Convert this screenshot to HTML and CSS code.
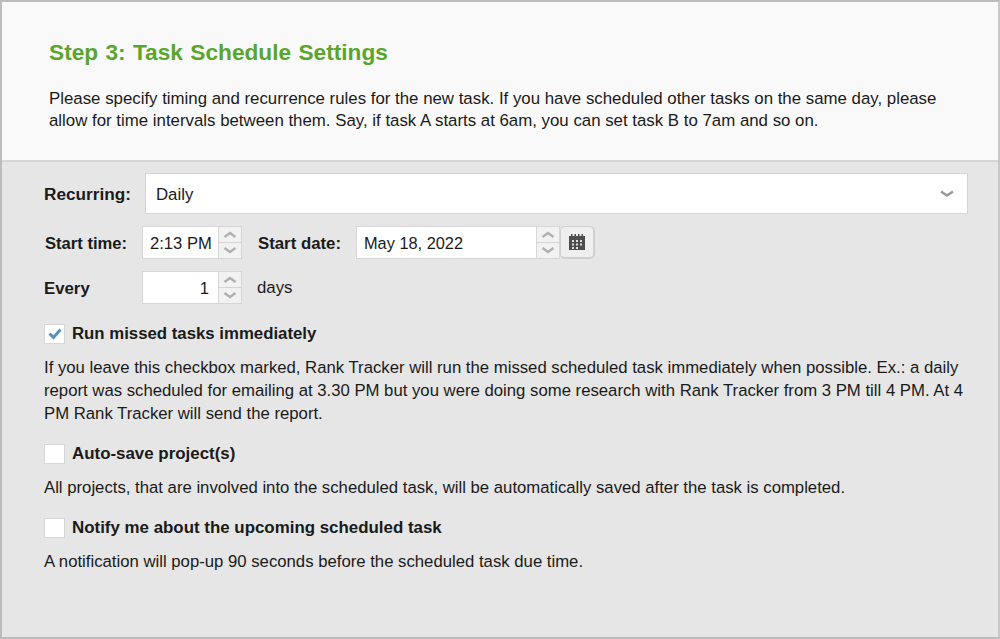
FILE: index.html
```html
<!DOCTYPE html>
<html lang="en">
<head>
<meta charset="utf-8">
<title>Task Schedule Settings</title>
<link rel="stylesheet" href="styles.css">
</head>
<body>
<main class="frame">
  <header class="head">
    <h1 class="title">Step 3: Task Schedule Settings</h1>
    <p class="intro">Please specify timing and recurrence rules for the new task. If you have scheduled other tasks on the same day, please<br>allow for time intervals between them. Say, if task A starts at 6am, you can set task B to 7am and so on.</p>
  </header>
  <section class="body">
    <div class="row-recurring">
      <span class="label label-recurring">Recurring:</span>
      <div class="select">
        <span class="select-value">Daily</span>
        <svg class="chev" width="14" height="8" viewBox="0 0 14 8"><path d="M1 1.5 L7 5.5 L13 1.5" fill="none" stroke="#999" stroke-width="2.6"/></svg>
      </div>
    </div>
    <div class="row-time">
      <span class="label label-time">Start time:</span>
      <div class="spin spin-small">
        <span class="spin-value">2:13 PM</span>
        <span class="arrows">
          <span class="arrow"><svg width="14" height="7" viewBox="0 0 14 7"><path d="M1.5 6 L7 2 L12.5 6" fill="none" stroke="#b0b0b0" stroke-width="2.4"/></svg></span>
          <span class="arrow"><svg width="14" height="7" viewBox="0 0 14 7"><path d="M1.5 1 L7 5 L12.5 1" fill="none" stroke="#b0b0b0" stroke-width="2.4"/></svg></span>
        </span>
      </div>
      <span class="label label-date">Start date:</span>
      <div class="spin spin-date">
        <span class="spin-value date-value">May 18, 2022</span>
        <span class="arrows">
          <span class="arrow"><svg width="14" height="7" viewBox="0 0 14 7"><path d="M1.5 6 L7 2 L12.5 6" fill="none" stroke="#b0b0b0" stroke-width="2.4"/></svg></span>
          <span class="arrow"><svg width="14" height="7" viewBox="0 0 14 7"><path d="M1.5 1 L7 5 L12.5 1" fill="none" stroke="#b0b0b0" stroke-width="2.4"/></svg></span>
        </span>
      </div>
      <div class="cal">
        <svg width="18" height="18" viewBox="0 0 18 18"><path fill="#4d4d4d" d="M1 3h2V1h1.5v2h2V1h1.5v2h2V1h1.5v2h2V1H15v2h2v14H1z"/><g fill="#dedede"><rect x="4" y="7" width="2" height="2"/><rect x="8" y="7" width="2" height="2"/><rect x="12" y="7" width="2" height="2"/><rect x="4" y="10.5" width="2" height="2"/><rect x="8" y="10.5" width="2" height="2"/><rect x="12" y="10.5" width="2" height="2"/><rect x="8" y="14" width="2" height="2"/><rect x="4" y="14" width="2" height="2"/></g></svg>
      </div>
    </div>
    <div class="row-every">
      <span class="label label-every">Every</span>
      <div class="spin spin-small">
        <span class="spin-value right">1</span>
        <span class="arrows">
          <span class="arrow"><svg width="14" height="7" viewBox="0 0 14 7"><path d="M1.5 6 L7 2 L12.5 6" fill="none" stroke="#b0b0b0" stroke-width="2.4"/></svg></span>
          <span class="arrow"><svg width="14" height="7" viewBox="0 0 14 7"><path d="M1.5 1 L7 5 L12.5 1" fill="none" stroke="#b0b0b0" stroke-width="2.4"/></svg></span>
        </span>
      </div>
      <span class="unit">days</span>
    </div>
    <div class="option first">
      <span class="check"><svg width="16" height="14" viewBox="0 0 16 14"><path d="M2.5 6.5 L6.5 10.5 L13.5 2.5" fill="none" stroke="#5b8fbe" stroke-width="3"/></svg></span>
      <span class="label">Run missed tasks immediately</span>
    </div>
    <p class="desc">If you leave this checkbox marked, Rank Tracker will run the missed scheduled task immediately when possible. Ex.: a daily<br>report was scheduled for emailing at 3.30 PM but you were doing some research with Rank Tracker from 3 PM till 4 PM. At 4<br>PM Rank Tracker will send the report.</p>
    <div class="option">
      <span class="check"></span>
      <span class="label label-wide">Auto-save project(s)</span>
    </div>
    <p class="desc">All projects, that are involved into the scheduled task, will be automatically saved after the task is completed.</p>
    <div class="option">
      <span class="check"></span>
      <span class="label label-wide">Notify me about the upcoming scheduled task</span>
    </div>
    <p class="desc">A notification will pop-up 90 seconds before the scheduled task due time.</p>
  </section>
</main>
</body>
</html>
```

FILE: styles.css
```css
* { box-sizing: border-box; }
html, body { margin: 0; height: 100%; background: #fff; }
body { width: 1000px; height: 639px; overflow: hidden; font-family: "Liberation Sans", Arial, sans-serif; font-size: 16.8px; color: #1a1a1a; }
.frame { width: 1000px; height: 639px; border: 2px solid #bcbcbc; border-right-color: #c8c8c8; display: flex; flex-direction: column; background: #e6e6e6; }
.head { height: 160px; background: #f9f9f9; border-bottom: 2px solid #d6d6d6; padding: 37px 0 0 47px; }
.title { margin: 0; font-size: 22.7px; line-height: 26px; font-weight: bold; color: #5aa62d; word-spacing: 1px; }
.intro { margin: 23px 0 0; line-height: 22px; font-size: 16.83px; }
.body { flex: 1; padding: 11px 30px 0 42px; }
.label { font-weight: bold; }
.row-recurring { display: flex; align-items: center; }
.label-recurring { width: 101px; padding-top: 2px; font-size: 17.2px; }
.select { width: 823px; height: 41px; background: #fff; border: 1px solid #d4d4d4; display: flex; align-items: center; justify-content: space-between; padding: 0 13px 0 10px; }
.select-value { padding-top: 2px; }
.row-time { display: flex; align-items: center; margin-top: 12px; height: 33px; }
.row-every { display: flex; align-items: center; margin-top: 12px; height: 33px; }
.label-time { width: 98px; padding: 2px 0 0 1px; font-size: 16.6px; }
.label-every { width: 98px; padding-top: 2px; }
.label-date { margin-left: 16px; width: 98px; padding-top: 2px; }
.spin { display: flex; height: 33px; background: #fff; border: 1px solid #d6d6d6; }
.spin-small { width: 100px; }
.spin-date { width: 204px; }
.spin-value { flex: 1; padding-left: 7px; line-height: 33px; font-size: 16.6px; }
.date-value { font-size: 16.35px; }
.spin-value.right { text-align: right; padding: 0 9px 0 0; }
.arrows { width: 23px; display: flex; flex-direction: column; border-left: 1px solid #d6d6d6; background: #f2f2f2; }
.arrow { flex: 1; display: flex; align-items: center; justify-content: center; }
.arrow + .arrow { border-top: 1px solid #d6d6d6; }
.cal { width: 35px; height: 33px; background: #efefef; border: 1px solid #cfcfcf; border-bottom-width: 2px; border-right-width: 2px; border-radius: 5px; display: flex; align-items: center; justify-content: center; }
.unit { margin-left: 15px; padding-top: 1px; }
.option { display: flex; align-items: center; height: 22px; margin-top: 18px; }
.option.first { margin-top: 19px; }
.check { width: 21px; height: 20px; background: #fff; border: 1px solid #d6d6d6; margin-right: 7px; display: flex; align-items: center; justify-content: center; }
.label-wide { font-size: 16.9px; }
.desc { margin: 11px 0 0; line-height: 23px; font-size: 16.73px; }
```
